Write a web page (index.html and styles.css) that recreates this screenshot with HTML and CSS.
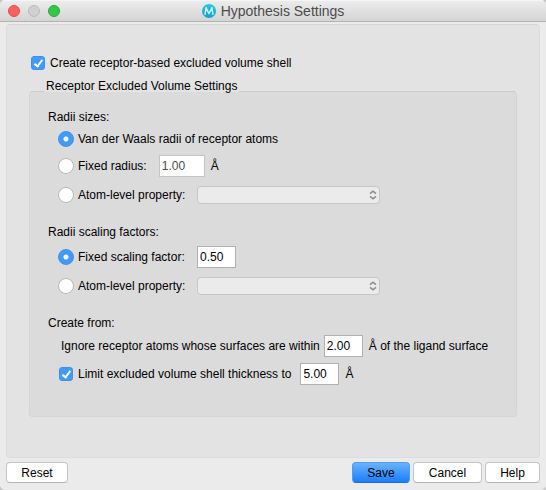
FILE: index.html
```html
<!DOCTYPE html>
<html lang="en">
<head>
<meta charset="utf-8">
<meta name="viewport" content="width=device-width, initial-scale=1">
<title>Hypothesis Settings</title>
<link rel="stylesheet" href="styles.css">
</head>
<body>
<form class="window">
  <header class="titlebar">
    <div class="lights">
      <button type="button" class="light light-close" aria-label="Close"></button>
      <button type="button" class="light light-minimize" aria-label="Minimize" disabled></button>
      <button type="button" class="light light-zoom" aria-label="Zoom"></button>
    </div>
    <h1 class="title">
      <svg class="logo" viewBox="0 0 14 14" aria-hidden="true">
        <defs><linearGradient id="disc" x1="0" y1="0" x2="0" y2="1"><stop offset="0" stop-color="#2fc5e8"/><stop offset="1" stop-color="#0aa3d2"/></linearGradient></defs>
        <circle cx="7" cy="7" r="7" fill="url(#disc)"/>
        <path d="M3 10.8 4 3.6 7 9.6 10 3.6l1 7.2" fill="none" stroke="#d8f4fb" stroke-width="1.4" stroke-linejoin="round"/>
      </svg>
      Hypothesis Settings
    </h1>
  </header>

  <main class="panel">
    <div class="row shell-row">
      <input type="checkbox" class="check" id="shell" checked>
      <label for="shell">Create receptor-based excluded volume shell</label>
    </div>

    <h2 class="group-title" id="group-title">Receptor Excluded Volume Settings</h2>
    <div class="group" role="group" aria-labelledby="group-title">
      <section class="section">
        <h3 class="heading">Radii sizes:</h3>
        <div class="row option-row">
          <input type="radio" class="radio" name="radii" id="vdw" checked>
          <label for="vdw">Van der Waals radii of receptor atoms</label>
        </div>
        <div class="row field-row">
          <input type="radio" class="radio" name="radii" id="fixed-radius">
          <label for="fixed-radius">Fixed radius:</label>
          <input type="text" class="field field-wide" value="1.00" aria-label="Fixed radius" disabled>
          <span>Å</span>
        </div>
        <div class="row combo-row">
          <input type="radio" class="radio" name="radii" id="radius-property">
          <label class="combo-label" for="radius-property">Atom-level property:</label>
          <span class="combo">
            <select aria-label="Radius property" disabled><option></option></select>
            <svg class="arrows" viewBox="0 0 8 10" aria-hidden="true"><path d="M1 3.7 4 1.2l3 2.5M1 6.3l3 2.5 3-2.5"/></svg>
          </span>
        </div>
      </section>

      <section class="section">
        <h3 class="heading">Radii scaling factors:</h3>
        <div class="row field-row">
          <input type="radio" class="radio" name="scaling" id="fixed-scaling" checked>
          <label class="combo-label" for="fixed-scaling">Fixed scaling factor:</label>
          <input type="text" class="field" value="0.50" aria-label="Fixed scaling factor">
        </div>
        <div class="row combo-row">
          <input type="radio" class="radio" name="scaling" id="scaling-property">
          <label class="combo-label" for="scaling-property">Atom-level property:</label>
          <span class="combo">
            <select aria-label="Scaling property" disabled><option></option></select>
            <svg class="arrows" viewBox="0 0 8 10" aria-hidden="true"><path d="M1 3.7 4 1.2l3 2.5M1 6.3l3 2.5 3-2.5"/></svg>
          </span>
        </div>
      </section>

      <section class="section">
        <h3 class="heading">Create from:</h3>
        <div class="row distance-row">
          <label for="distance">Ignore receptor atoms whose surfaces are within</label>
          <input type="text" class="field" id="distance" value="2.00">
          <span>Å of the ligand surface</span>
        </div>
        <div class="row limit-row">
          <input type="checkbox" class="check" id="limit" checked>
          <label for="limit">Limit excluded volume shell thickness to</label>
          <input type="text" class="field thickness" value="5.00" aria-label="Shell thickness">
          <span>Å</span>
        </div>
      </section>
    </div>
  </main>

  <footer class="actions">
    <button type="reset" class="button">Reset</button>
    <div class="actions-end">
      <button type="submit" class="button button-primary">Save</button>
      <button type="button" class="button button-cancel">Cancel</button>
      <button type="button" class="button button-help">Help</button>
    </div>
  </footer>
</form>
</body>
</html>
```
FILE: styles.css
```css
* { box-sizing: border-box; }

body {
  margin: 0;
  background: #c4c4c4;
  color: #000;
  font: 12px/16px "Liberation Sans", Arial, sans-serif;
}

input, select, button { margin: 0; font: inherit; color: inherit; }

.window {
  display: flex;
  flex-direction: column;
  min-height: 100vh;
  background: #ebebeb;
  border-radius: 5px;
  overflow: hidden;
}

.titlebar {
  display: grid;
  grid-template-columns: 1fr auto 1fr;
  align-items: center;
  height: 22px;
  padding: 0 8px;
  background: linear-gradient(#ececec, #d4d4d4);
  border-top: 1px solid #f5f5f5;
  border-bottom: 1px solid #b2b2b2;
}

.lights { display: flex; gap: 8px; }

.light {
  width: 12px;
  height: 12px;
  padding: 0;
  border: 1px solid;
  border-radius: 50%;
}
.light-close { background: #fc605c; border-color: #e24d49; }
.light-minimize { background: #d0d0d0; border-color: #bababa; }
.light-zoom { background: #34c84a; border-color: #27aa35; }

.title {
  display: flex;
  align-items: center;
  gap: 5px;
  margin: 0;
  color: #4b4b4b;
  font-size: 14px;
  font-weight: 400;
}
.logo { width: 14px; height: 14px; }

.panel {
  flex: 1;
  margin: 2px 6px 0;
  padding: 30px 22px 40px;
  background: #e3e3e3;
  border: 1px solid #dddddd;
  border-top-color: #d5d5d5;
  border-radius: 4px;
}

.row { display: flex; align-items: center; white-space: nowrap; }
.shell-row { gap: 5px; padding-left: 2px; height: 16px; }

.group-title {
  position: relative;
  width: max-content;
  margin: 7px 0 -3px 15px;
  padding: 0 2px;
  background: linear-gradient(#e3e3e3 90%, transparent 90%);
  font-size: 12px;
  font-weight: 400;
}

.group {
  display: grid;
  gap: 15px;
  padding: 15px 18px 30px;
  background: #dbdbdb;
  border: 1px solid #d5d5d5;
  border-top-color: #cbcbcb;
  border-radius: 4px;
}

.heading { margin: 0; font-size: 12px; font-weight: 400; line-height: 20px; }
.section .row { height: 24px; padding-left: 10px; }
.section .field-row { margin-top: 3px; }
.section .combo-row { margin-top: 5px; }
.section .distance-row { margin-top: 1px; padding-left: 13px; }
.section .limit-row { margin-top: 4px; padding-left: 11px; }

.radio {
  appearance: none;
  flex: none;
  width: 16px;
  height: 16px;
  margin-right: 4px;
  background: #fff;
  border: 1px solid #b8b8b8;
  border-radius: 50%;
}
.radio:checked {
  background: radial-gradient(circle, #fff 2px, #3f9afb 3px);
  border-color: #3b91f0;
}

.check {
  appearance: none;
  flex: none;
  width: 14px;
  height: 14px;
  background: #fff;
  border: 1px solid #b8b8b8;
  border-radius: 3px;
}
.check:checked { background: #429bfb; border-color: #3b91f0; }
.check:checked::after {
  content: "";
  display: block;
  box-sizing: border-box;
  width: 5px;
  height: 9px;
  margin: 1px 0 0 4px;
  border: solid #fff;
  border-width: 0 2px 2px 0;
  transform: rotate(36deg);
}
.section .check { margin-right: 5px; }

.field {
  width: 39px;
  height: 22px;
  margin: 0 6px 0 4px;
  padding: 0 2px;
  background: #fff;
  border: 1px solid #b0b0b0;
  border-radius: 0;
}
.field-wide { width: 46px; margin-left: 12px; }
.field:disabled { color: #4c4c4c; border-color: #c4c4c4; }
.thickness { margin-left: 9px; }

.combo-label { width: 119px; }
.combo-label + .field { margin-left: 0; }

.combo { display: grid; align-items: center; width: 183px; }
.combo select, .arrows { grid-area: 1 / 1; }
.combo select {
  appearance: none;
  width: 100%;
  height: 18px;
  padding: 0 20px 0 6px;
  background: #ebebeb;
  border: 1px solid #c6c6c6;
  border-radius: 4px;
  opacity: 1;
}
.arrows {
  justify-self: end;
  width: 8px;
  height: 10px;
  margin-right: 3px;
  fill: none;
  stroke: #8c8c8c;
  stroke-width: 1.6;
  pointer-events: none;
}

.actions {
  display: flex;
  justify-content: space-between;
  padding: 4px 6px 7px;
}
.actions-end { display: flex; gap: 3px; }

.button {
  min-width: 62px;
  height: 21px;
  padding: 0 12px;
  background: #fff;
  border: 1px solid #c4c4c4;
  border-bottom-color: #b4b4b4;
  border-radius: 4px;
  line-height: 18px;
}
.button-primary {
  min-width: 58px;
  background: linear-gradient(#6bb2fa, #1a7efd);
  border-color: #4d9cf2;
  border-bottom-color: #1670e8;
}
.button-cancel { min-width: 69px; }
.button-help { min-width: 55px; }
```
